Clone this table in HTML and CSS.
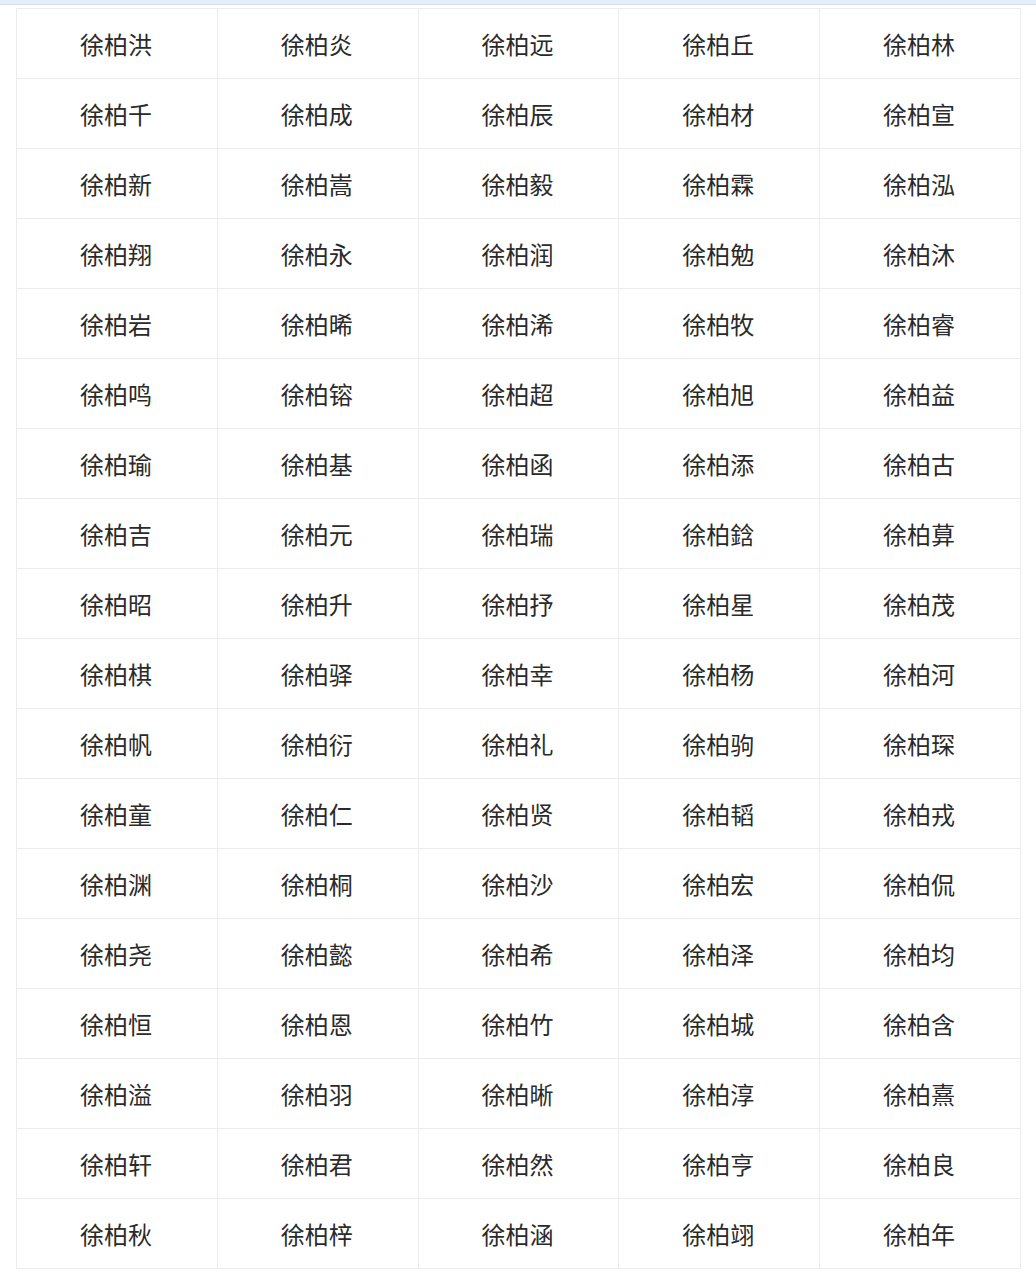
FILE: index.html
```html
<!DOCTYPE html>
<html lang="zh">
<head>
<meta charset="utf-8">
<title>徐柏</title>
<link rel="stylesheet" href="styles.css">
</head>
<body>
<div class="topbar"></div>
<div class="table">
<div class="cell">徐柏洪</div><div class="cell">徐柏炎</div><div class="cell">徐柏远</div><div class="cell">徐柏丘</div><div class="cell">徐柏林</div>
<div class="cell">徐柏千</div><div class="cell">徐柏成</div><div class="cell">徐柏辰</div><div class="cell">徐柏材</div><div class="cell">徐柏宣</div>
<div class="cell">徐柏新</div><div class="cell">徐柏嵩</div><div class="cell">徐柏毅</div><div class="cell">徐柏霖</div><div class="cell">徐柏泓</div>
<div class="cell">徐柏翔</div><div class="cell">徐柏永</div><div class="cell">徐柏润</div><div class="cell">徐柏勉</div><div class="cell">徐柏沐</div>
<div class="cell">徐柏岩</div><div class="cell">徐柏晞</div><div class="cell">徐柏浠</div><div class="cell">徐柏牧</div><div class="cell">徐柏睿</div>
<div class="cell">徐柏鸣</div><div class="cell">徐柏镕</div><div class="cell">徐柏超</div><div class="cell">徐柏旭</div><div class="cell">徐柏益</div>
<div class="cell">徐柏瑜</div><div class="cell">徐柏基</div><div class="cell">徐柏函</div><div class="cell">徐柏添</div><div class="cell">徐柏古</div>
<div class="cell">徐柏吉</div><div class="cell">徐柏元</div><div class="cell">徐柏瑞</div><div class="cell">徐柏鋡</div><div class="cell">徐柏萛</div>
<div class="cell">徐柏昭</div><div class="cell">徐柏升</div><div class="cell">徐柏抒</div><div class="cell">徐柏星</div><div class="cell">徐柏茂</div>
<div class="cell">徐柏棋</div><div class="cell">徐柏驿</div><div class="cell">徐柏幸</div><div class="cell">徐柏杨</div><div class="cell">徐柏河</div>
<div class="cell">徐柏帆</div><div class="cell">徐柏衍</div><div class="cell">徐柏礼</div><div class="cell">徐柏驹</div><div class="cell">徐柏琛</div>
<div class="cell">徐柏童</div><div class="cell">徐柏仁</div><div class="cell">徐柏贤</div><div class="cell">徐柏韬</div><div class="cell">徐柏戎</div>
<div class="cell">徐柏渊</div><div class="cell">徐柏桐</div><div class="cell">徐柏沙</div><div class="cell">徐柏宏</div><div class="cell">徐柏侃</div>
<div class="cell">徐柏尧</div><div class="cell">徐柏懿</div><div class="cell">徐柏希</div><div class="cell">徐柏泽</div><div class="cell">徐柏均</div>
<div class="cell">徐柏恒</div><div class="cell">徐柏恩</div><div class="cell">徐柏竹</div><div class="cell">徐柏城</div><div class="cell">徐柏含</div>
<div class="cell">徐柏溢</div><div class="cell">徐柏羽</div><div class="cell">徐柏晰</div><div class="cell">徐柏淳</div><div class="cell">徐柏熹</div>
<div class="cell">徐柏轩</div><div class="cell">徐柏君</div><div class="cell">徐柏然</div><div class="cell">徐柏亨</div><div class="cell">徐柏良</div>
<div class="cell">徐柏秋</div><div class="cell">徐柏梓</div><div class="cell">徐柏涵</div><div class="cell">徐柏翊</div><div class="cell">徐柏年</div>
</div>
</body>
</html>
```
FILE: styles.css
```css
html, body {
  margin: 0;
  padding: 0;
  background: #ffffff;
}
body {
  font-family: "Noto Sans CJK SC", "Noto Sans", sans-serif;
  color: #2a2a2a;
}
.topbar {
  height: 4px;
  background: #e4edf8;
  border-bottom: 1px solid #d2dfee;
  margin-bottom: 3px;
}
.table {
  margin-left: 16px;
  width: 1004px;
  display: grid;
  grid-template-columns: repeat(5, 1fr);
  border-top: 1px solid #ececec;
  border-left: 1px solid #ececec;
}
.cell {
  box-sizing: content-box;
  height: 68px;
  padding-top: 1px;
  padding-right: 2px;
  border-right: 1px solid #ececec;
  border-bottom: 1px solid #ececec;
  display: flex;
  align-items: center;
  justify-content: center;
  font-size: 24px;
  line-height: 1;
}
```
